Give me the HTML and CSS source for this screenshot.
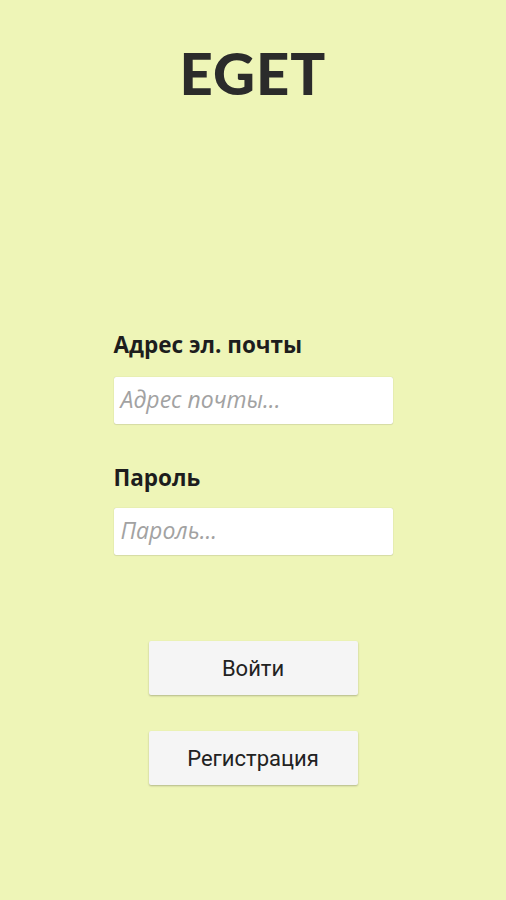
FILE: index.html
```html
<!DOCTYPE html>
<html lang="ru">
<head>
<meta charset="utf-8">
<link rel="stylesheet" href="styles.css">
</head>
<body>
<div class="screen">
  <h1 class="logo">EGET</h1>
  <form class="form">
    <label class="label">Адрес эл. почты</label>
    <div class="input"><span class="ph">Адрес почты...</span></div>
    <label class="label label2">Пароль</label>
    <div class="input input2"><span class="ph">Пароль...</span></div>
  </form>
  <div class="buttons">
    <div class="btn">Войти</div>
    <div class="btn">Регистрация</div>
  </div>
</div>
</body>
</html>
```
FILE: styles.css
```css
html, body {
  margin: 0;
  padding: 0;
  background: #eef5b7;
}
.screen {
  width: 506px;
  height: 900px;
  display: flex;
  flex-direction: column;
  align-items: center;
  font-family: "Open Sans", "Lato", sans-serif;
}
.logo {
  margin: 40px 0 0 0;
  font-family: "Lato", sans-serif;
  font-weight: 900;
  font-size: 58px;
  line-height: 66px;
  color: #2b2b2b;
  letter-spacing: 1px;
}
.form {
  margin-top: 227px;
  width: 279px;
  display: flex;
  flex-direction: column;
}
.label {
  font-size: 22.5px;
  font-weight: 700;
  color: #1d1d1d;
  line-height: 24px;
  height: 24px;
}
.label2 {
  margin-top: 42px;
}
.input {
  margin-top: 20px;
  height: 47px;
  background: #ffffff;
  border-radius: 2px;
  box-shadow: 0 0 1px rgba(0,0,0,0.25), 0 1px 1px rgba(0,0,0,0.08);
  display: flex;
  align-items: center;
  padding-left: 7px;
}
.input2 {
  margin-top: 18px;
}
.ph {
  font-style: italic;
  font-size: 23px;
  color: #a2a2a2;
  position: relative;
  top: -2px;
}
.buttons {
  margin-top: 86px;
  display: flex;
  flex-direction: column;
  gap: 36px;
}
.btn {
  width: 209px;
  height: 54px;
  background: #f5f5f5;
  border-radius: 2px;
  box-shadow: 0 1px 2px rgba(0,0,0,0.25);
  display: flex;
  align-items: center;
  justify-content: center;
  font-family: "Roboto", sans-serif;
  font-size: 22px;
  color: #222;
}
```
